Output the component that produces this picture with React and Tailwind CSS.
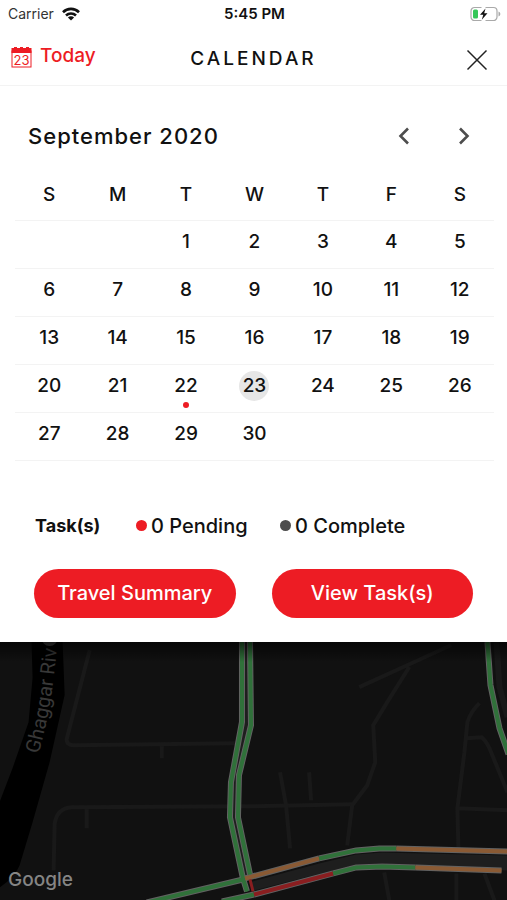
import React from 'react';

const WEEKDAYS = [
  { short: 'S', name: 'Sunday' },
  { short: 'M', name: 'Monday' },
  { short: 'T', name: 'Tuesday' },
  { short: 'W', name: 'Wednesday' },
  { short: 'T', name: 'Thursday' },
  { short: 'F', name: 'Friday' },
  { short: 'S', name: 'Saturday' },
];

const WEEKS = [
  [null, null, 1, 2, 3, 4, 5],
  [6, 7, 8, 9, 10, 11, 12],
  [13, 14, 15, 16, 17, 18, 19],
  [20, 21, 22, 23, 24, 25, 26],
  [27, 28, 29, 30, null, null, null],
];

const TODAY = 23;
const DAYS_WITH_TASKS = [22];

const WifiIcon = () => (
  <svg width="18" height="14" viewBox="0 0 18 14" aria-hidden="true">
    <g fill="none" stroke="#111" strokeWidth="2.6">
      <path d="M1 5.2a11.4 11.4 0 0 1 16 0" />
      <path d="M4 8.5a7.2 7.2 0 0 1 10 0" />
    </g>
    <path d="M9 13.6 5.9 10.6a4.4 4.4 0 0 1 6.2 0z" fill="#111" />
  </svg>
);

const BatteryIcon = () => (
  <svg width="31" height="16" viewBox="0 0 31 16" role="img" aria-label="Battery charging">
    <path
      d="M11.5 1.5H4.5a3.5 3.5 0 0 0-3.5 3.5v6a3.5 3.5 0 0 0 3.5 3.5h7M15.5 1.5h8a3.5 3.5 0 0 1 3.5 3.5v6a3.5 3.5 0 0 1-3.5 3.5h-8"
      fill="none"
      stroke="#a9a9a9"
      strokeWidth="1.2"
    />
    <path d="M28.5 5.5a2.6 2.6 0 0 1 0 5z" fill="#a9a9a9" />
    <rect x="3" y="3.5" width="5" height="9" rx="1.5" fill="#35c759" />
    <path d="M15.5 2.5 10 8.7h3.3l-1.5 5 5.7-6.5h-3.3z" fill="#111" />
  </svg>
);

const TodayIcon = () => (
  <svg width="21" height="22" viewBox="0 0 21 22" aria-hidden="true">
    <path d="M3 1h3v1h3V1h3v1h3V1h3v1h2.5v5H.5V2H3z" fill="#ed1c24" />
    <rect x="1" y="5" width="19" height="16" fill="none" stroke="#ed1c24" />
    <text x="10.5" y="18.5" textAnchor="middle" fontSize="13" fontWeight="400" fill="#ed1c24">
      23
    </text>
  </svg>
);

const ChevronIcon = ({ d }) => (
  <svg width="12" height="18" viewBox="0 0 12 18" fill="none" stroke="#4d4d4d" strokeWidth="2.6" aria-hidden="true">
    <path d={d} />
  </svg>
);

// Each traffic line is drawn twice: grey casing below, colour on top
const TRAFFIC = [
  { color: '#30713a', d: 'M242 0V80L231 140 230 175 243 236 247 249' },
  { color: '#30713a', d: 'M250 0 251 83 239 133 238 175 250 232' },
  { color: '#30713a', d: 'M147 260 243 237' },
  { color: '#8a5a34', d: 'M245 236 319 216' },
  { color: '#30713a', d: 'M319 216 356 208 379 206 396 206' },
  { color: '#8a5a34', d: 'M396 206 507 209' },
  { color: '#30713a', d: 'M222 259 254 252' },
  { color: '#8a1e20', d: 'M254 252 333 231' },
  { color: '#30713a', d: 'M333 231 356 225 382 224 415 225' },
  { color: '#8a5a34', d: 'M415 225 501 228' },
  { color: '#30713a', d: 'M487 0 490 43 499 86 508 112' },
];

const TrafficMap = () => (
  <svg
    className="absolute inset-0 w-full h-full"
    viewBox="0 0 507 258"
    preserveAspectRatio="xMidYMin slice"
    role="img"
    aria-label="Traffic map"
  >
    <defs>
      <linearGradient id="sheetShadow" x1="0" y1="0" x2="0" y2="1">
        <stop offset="0" stopColor="#000" stopOpacity="0.65" />
        <stop offset="1" stopColor="#000" stopOpacity="0" />
      </linearGradient>
      <path id="riverLabel" d="M39 112Q55 55 58-10" />
    </defs>
    <rect width="507" height="258" fill="#111" />

    {/* River */}
    <path d="M32 0 33 36 29 80 13 126 0 160V245Q15 235 20 223L33 180 50 120 65 53 63 0z" fill="#000" />
    <circle cx="50" cy="-4" r="8" fill="#444" />
    <text fontFamily="Roboto, sans-serif" fontSize="20" fill="#383838">
      <textPath href="#riverLabel">Ghaggar Riv</textPath>
    </text>

    {/* Side streets */}
    <g fill="none" stroke="#191919" strokeWidth="4">
      <path d="M90 8 67 97Q67 103 74 103L235 101M162 103v13" />
      <path d="M54 228 55 182Q57 166 72 165L254 164 352 162M87 165v21" />
      <path d="M359 45 414 20 451 3M409 25 387 60 373 83 375 120 367 143 352 163 347 203" />
      <path d="M280 130 286 163 290 206M309 130 311 158" />
      <path d="M479 61Q470 70 467 80L464 110 457 166 458 206M466 96 481 95Q485 98 489 106L507 150M457 166 507 168" />
      <path d="M384 230 389 258M456 231V258M484 231 494 258" />
      <path d="M496 0 499 45 507 75" strokeWidth="6" />
    </g>
    <path d="M249 240 319 221 356 212 382 210 507 213V228L382 221 356 222 254 248z" fill="#1e1e1e" />
    <path d="M246 0 247 81 235 138 234 175 248 235" fill="none" stroke="#1e1e1e" strokeWidth="5" />

    {/* Traffic */}
    <g fill="none" stroke="#626262" strokeWidth="6">
      {TRAFFIC.map((line) => (
        <path key={line.d} d={line.d} />
      ))}
    </g>
    <g fill="none" strokeWidth="4">
      {TRAFFIC.map((line) => (
        <path key={line.d} d={line.d} stroke={line.color} />
      ))}
      <path d="M250 237 253 249" stroke="#8a1e20" strokeWidth="3" />
    </g>

    <rect width="507" height="20" fill="url(#sheetShadow)" />
  </svg>
);

const DayCell = ({ day }) => (
  <td className="h-12 p-0 pb-1 border-b border-[#f3f3f3] text-center">
    {day && (
      <button
        type="button"
        className={`relative size-[30px] rounded-full ${day === TODAY ? 'bg-[#e6e6e6]' : ''}`}
        aria-current={day === TODAY ? 'date' : undefined}
      >
        {day}
        {DAYS_WITH_TASKS.includes(day) && (
          <span className="absolute left-3 top-[31px] size-1.5 rounded-full bg-[#ed1c24]" />
        )}
      </button>
    )}
  </td>
);

const App = () => {
  return (
    <div className="min-h-screen flex flex-col bg-white text-[#111] font-['Inter',sans-serif]">
      {/* Status bar */}
      <div className="h-7 shrink-0 grid grid-cols-3 items-center pl-2 pr-1.5 text-sm">
        <span className="flex items-center gap-2 text-[#333]">
          Carrier
          <WifiIcon />
        </span>
        <span className="text-center text-[15px] font-semibold">5:45 PM</span>
        <span className="flex justify-end">
          <BatteryIcon />
        </span>
      </div>

      {/* Header */}
      <header className="h-[58px] shrink-0 grid grid-cols-3 items-center px-[11px] border-b border-[#f3f3f3]">
        <button type="button" className="flex items-center gap-2 text-[19px] font-medium text-[#ed1c24]">
          <TodayIcon />
          Today
        </button>
        <h1 className="pt-1.5 text-center text-[19px] font-medium tracking-[3px]">CALENDAR</h1>
        <button type="button" aria-label="Close" className="justify-self-end pt-1.5 pr-2">
          <svg width="22" height="22" viewBox="0 0 22 22" stroke="#222" strokeWidth="1.5" aria-hidden="true">
            <path d="M1.5 1.5 20.5 20.5M20.5 1.5 1.5 20.5" />
          </svg>
        </button>
      </header>

      <main>
        {/* Month */}
        <div className="flex items-center justify-between pt-8 pl-7 pr-[37px]">
          <h2 className="text-[22px] leading-9 font-medium tracking-[1px]">September 2020</h2>
          <div className="flex gap-12">
            <button type="button" aria-label="Previous month">
              <ChevronIcon d="M10 1.5 2.5 9l7.5 7.5" />
            </button>
            <button type="button" aria-label="Next month">
              <ChevronIcon d="M2 1.5 9.5 9 2 16.5" />
            </button>
          </div>
        </div>

        <div className="pl-[15px] pr-[13px] pt-4">
          <table className="w-full table-fixed text-[19px] font-medium">
            <thead>
              <tr>
                {WEEKDAYS.map((day) => (
                  <th
                    key={day.name}
                    abbr={day.name}
                    scope="col"
                    className="h-[50px] p-0 border-b border-[#f3f3f3] font-medium"
                  >
                    {day.short}
                  </th>
                ))}
              </tr>
            </thead>
            <tbody>
              {WEEKS.map((week, i) => (
                <tr key={i}>
                  {week.map((day, j) => (
                    <DayCell key={j} day={day} />
                  ))}
                </tr>
              ))}
            </tbody>
          </table>
        </div>

        {/* Task counts */}
        <div className="flex items-center pt-[51px] pl-[35px] text-xl">
          <span className="w-[101px] text-lg font-bold">Task(s)</span>
          <span className="w-36 flex items-center gap-1 font-medium">
            <span className="size-[11px] rounded-full bg-[#ed1c24]" />
            0 Pending
          </span>
          <span className="flex items-center gap-1 font-medium">
            <span className="size-[11px] rounded-full bg-[#4d4d4d]" />
            0 Complete
          </span>
        </div>

        <div className="grid grid-cols-2 gap-9 pt-[29px] pb-6 px-[34px] text-xl font-medium text-white">
          <button type="button" className="h-[49px] rounded-full bg-[#ed1c24]">
            Travel Summary
          </button>
          <button type="button" className="h-[49px] rounded-full bg-[#ed1c24]">
            View Task(s)
          </button>
        </div>
      </main>

      <section className="relative flex-1 min-h-56 bg-[#111] overflow-hidden">
        <TrafficMap />
        <span className="absolute left-2 bottom-1 text-[19px] leading-8 font-medium text-[#858585]">
          Google
        </span>
      </section>
    </div>
  );
};

export default App;
